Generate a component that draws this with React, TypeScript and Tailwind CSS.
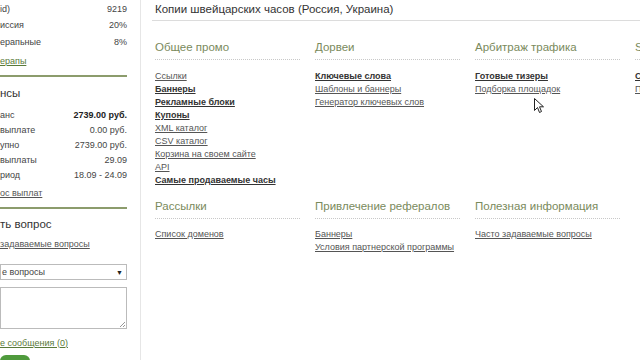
import React from 'react';

const font = { fontFamily: '"Liberation Sans", Arial, sans-serif' };

interface LinkItem {
  text: string;
  bold?: boolean;
}

interface Column {
  title: string;
  links: LinkItem[];
}

const topColumns: Column[] = [
  {
    title: 'Общее промо',
    links: [
      { text: 'Ссылки' },
      { text: 'Баннеры', bold: true },
      { text: 'Рекламные блоки', bold: true },
      { text: 'Купоны', bold: true },
      { text: 'XML каталог' },
      { text: 'CSV каталог' },
      { text: 'Корзина на своем сайте' },
      { text: 'API' },
      { text: 'Самые продаваемые часы', bold: true },
    ],
  },
  {
    title: 'Дорвеи',
    links: [
      { text: 'Ключевые слова', bold: true },
      { text: 'Шаблоны и баннеры' },
      { text: 'Генератор ключевых слов' },
    ],
  },
  {
    title: 'Арбитраж трафика',
    links: [{ text: 'Готовые тизеры', bold: true }, { text: 'Подборка площадок' }],
  },
  {
    title: 'SEO',
    links: [{ text: 'Статьи', bold: true }, { text: 'Пресс-релизы' }],
  },
];

const bottomColumns: Column[] = [
  { title: 'Рассылки', links: [{ text: 'Список доменов' }] },
  {
    title: 'Привлечение рефералов',
    links: [{ text: 'Баннеры' }, { text: 'Условия партнерской программы' }],
  },
  { title: 'Полезная информация', links: [{ text: 'Часто задаваемые вопросы' }] },
];

const StatRow = ({ label, value, bold, h }: { label: string; value: string; bold?: boolean; h: string }) => (
  <div className={`flex justify-between items-center ${h}`}>
    <span>{label}</span>
    <span className={bold ? 'font-bold text-[#222]' : ''}>{value}</span>
  </div>
);

const ColumnBlock = ({ col }: { col: Column }) => (
  <div className="w-[160px] shrink-0 pr-[15px]">
    <div className="text-[11.5px] text-[#7a8a5c] whitespace-nowrap h-[19px] leading-[19px]">{col.title}</div>
    <div className="border-b border-dotted border-[#c8c8c8] mt-[2px]" />
    <div className="mt-[9.5px] flex flex-col">
      {col.links.map((l) => (
        <a
          key={l.text}
          className={`text-[9px] leading-[13px] h-[13px] underline whitespace-nowrap ${l.bold ? 'font-bold text-[#333]' : 'text-[#555]'}`}
        >
          {l.text}
        </a>
      ))}
    </div>
  </div>
);

export default function App() {
  return (
    <div className="w-[640px] h-[360px] bg-white overflow-hidden flex relative" style={font}>
      {/* sidebar */}
      <div className="w-[141px] shrink-0 border-r border-[#e6e6e6] h-full">
        <div className="w-[127px] text-[9px] leading-[13px] text-[#444]">
          <div className="pt-[1px] flex flex-col">
            <StatRow label="id)" value="9219" h="h-[16.5px]" />
            <StatRow label="иссия" value="20%" h="h-[16.5px]" />
            <StatRow label="ерапьные" value="8%" h="h-[16.5px]" />
          </div>
          <a className="block h-[13px] mt-[4px] text-[#5a7a3a] underline">ерапы</a>
          <div className="mt-[7.5px] h-[2px] bg-[#8c9c6c]" />
          <div className="mt-[8px] h-[16px] leading-[16px] text-[11.5px] text-[#333]">нсы</div>
          <div className="mt-[6.5px] flex flex-col">
            <StatRow label="анс" value="2739.00 руб." bold h="h-[15px]" />
            <StatRow label="выплате" value="0.00 руб." h="h-[15px]" />
            <StatRow label="упно" value="2739.00 руб." h="h-[15px]" />
            <StatRow label="выплаты" value="29.09" h="h-[15px]" />
            <StatRow label="риод" value="18.09 - 24.09" h="h-[15px]" />
          </div>
          <a className="block h-[13px] mt-[4px] underline text-[#555]">ос выплат</a>
          <div className="mt-[7.5px] h-[2px] bg-[#8c9c6c]" />
          <div className="mt-[7px] h-[16px] leading-[16px] text-[11.5px] text-[#333]">ть вопрос</div>
          <a className="block h-[13px] mt-[5.5px] underline text-[#555]">задаваемые вопросы</a>
          <div className="mt-[13.5px] h-[16px] border border-[#bbb] flex items-center justify-between pl-[1px] pr-[3px]">
            <span>е вопросы</span>
            <span className="text-[7px] text-[#222]">▼</span>
          </div>
          <div className="mt-[7px] h-[42px] border border-[#bbb] relative">
            <svg className="absolute right-[1px] bottom-[1px]" width="6" height="6" viewBox="0 0 6 6">
              <path d="M1 6 L6 1 M4 6 L6 4" stroke="#999" strokeWidth="1" />
            </svg>
          </div>
          <a className="block h-[13px] mt-[7.5px] underline text-[#5a7a3a]">е сообщения (0)</a>
          <div className="mt-[5px] w-[30px] h-[10px] rounded-t-[6px] bg-[#4f9a3c]" />
        </div>
      </div>

      {/* content */}
      <div className="flex-1 min-w-0 pl-[11px] overflow-hidden">
        <div className="h-[21px] border-b border-[#dcdcdc] pl-[3px] text-[11.5px] text-[#333] leading-[18px] whitespace-nowrap">
          Копии швейцарских часов (Россия, Украина)
        </div>
        <div className="pl-[3px] pt-[17px] flex">
          {topColumns.map((c) => (
            <ColumnBlock key={c.title} col={c} />
          ))}
        </div>
        <div className="pl-[3px] pt-[10px] flex">
          {bottomColumns.map((c) => (
            <ColumnBlock key={c.title} col={c} />
          ))}
        </div>
      </div>

      {/* mouse pointer */}
      <svg className="absolute left-[534px] top-[98px]" width="11" height="16" viewBox="0 0 11 16">
        <path d="M0.5 0.5 L0.5 12.5 L3.5 9.5 L5.5 14.5 L7.5 13.5 L5.5 8.8 L9.5 8.8 Z" fill="#fff" stroke="#222" strokeWidth="1" />
      </svg>
    </div>
  );
}
